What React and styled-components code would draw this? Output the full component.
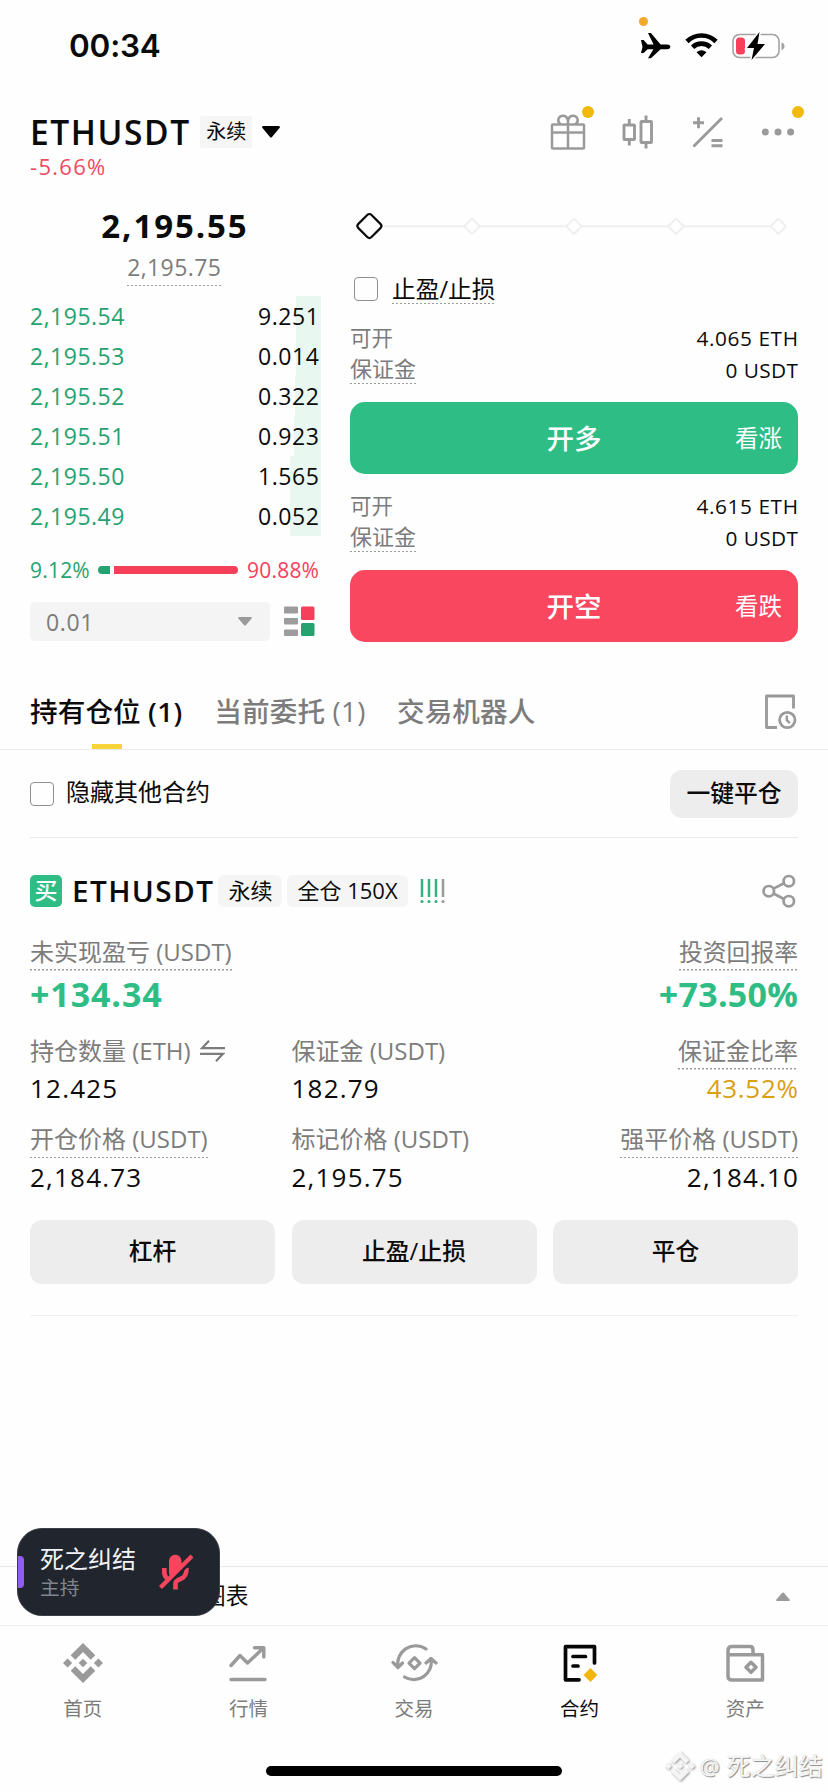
import React from 'react';
import styled, { createGlobalStyle } from 'styled-components';

const GREEN = '#2ebd85';
const BOOK_GREEN = '#25a26f';
const RED = '#f8475e';
const GRAY = '#9a9a9a';
const LABEL = '#7c7c7c';
const SANS = '"Open Sans", "Noto Sans CJK SC", sans-serif';

const Global = createGlobalStyle`
  * { box-sizing: border-box; }
  body { margin: 0; background: #fefefe; }
  button { font: inherit; border: 0; padding: 0; }
`;

const Screen = styled.div`
  position: relative;
  width: 828px;
  height: 1792px;
  display: flex;
  flex-direction: column;
  overflow: hidden;
  background: #fefefe;
  color: #0b0b0b;
  font-family: ${SANS};
  white-space: nowrap;
`;

const Txt = styled.span`
  display: block;
  font-size: ${p => p.$size || 24}px;
  line-height: ${p => p.$lh || 32}px;
  font-weight: ${p => p.$w || 400};
  color: ${p => p.$c || 'inherit'};
  letter-spacing: ${p => p.$ls || 0}px;
  margin-top: ${p => p.$mt || 0}px;
  margin-right: ${p => -(p.$ls || 0)}px;
`;

const Dotted = styled(Txt)`
  width: max-content;
  height: max-content;
  padding-bottom: ${p => p.$gap ?? 0}px;
  background: repeating-linear-gradient(90deg, #9c9c9c 0 2px, transparent 2px 4px) left bottom / 100% 1.5px no-repeat;
`;

/* status bar */
const StatusBar = styled.header`
  display: flex;
  align-items: center;
  justify-content: space-between;
  height: 92px;
  padding: 0 42px 0 69px;
  flex: none;
`;
const Clock = styled.div`
  font: 600 31.5px/40px Inter, sans-serif;
  letter-spacing: -0.2px;
`;
const StatusIcons = styled.div`
  display: flex;
  position: relative;
`;
const Dot = styled.i`
  position: absolute;
  width: ${p => p.$d}px;
  height: ${p => p.$d}px;
  border-radius: 50%;
  background: ${p => p.$c || '#f0b90b'};
  top: ${p => p.$t}px;
  left: ${p => p.$l}px;
`;

/* symbol header */
const SymbolBar = styled.div`
  display: flex;
  justify-content: space-between;
  height: 114px;
  padding: 20px 32px 0 30px;
  flex: none;
`;
const SymbolLine = styled.div`
  display: flex;
  align-items: center;
  height: 40px;
`;
const Tag = styled.span`
  height: 32px;
  line-height: 31px;
  padding: 0 ${p => p.$px || 10}px;
  margin-left: ${p => p.$ml || 0}px;
  font-size: ${p => p.$size || 22}px;
  border-radius: ${p => p.$r || 6}px;
  background: #f5f5f5;
`;
const CaretButton = styled.button`
  display: flex;
  margin-left: 10px;
  background: none;
`;
const HeaderIcons = styled.div`
  display: flex;
  gap: 34px;
  height: 40px;
  align-items: center;
`;
const IconBox = styled.div`
  position: relative;
  width: 36px;
  height: 36px;
`;

/* trading area */
const Trade = styled.section`
  display: grid;
  grid-template-columns: 291px 448px;
  column-gap: 29px;
  padding: 0 30px;
  height: 454px;
  flex: none;
`;
const Book = styled.div`
  display: flex;
  flex-direction: column;
`;
const LastPrice = styled.div`
  display: flex;
  flex-direction: column;
  align-items: center;
  height: 90px;
  padding-right: 3px;
`;
const BookRow = styled.div`
  display: flex;
  justify-content: space-between;
  align-items: center;
  height: 40px;
  padding-right: 2px;
  background: linear-gradient(#e9f7f1, #e9f7f1) right / ${p => p.$depth}px 100% no-repeat;
`;
const Ratio = styled.div`
  display: flex;
  align-items: center;
  justify-content: space-between;
  height: 68px;
  padding: 0 2px 0 0;
`;
const RatioTrack = styled.div`
  display: flex;
  gap: 4px;
  width: 140px;
  height: 8px;
`;
const RatioPart = styled.div`
  background: ${p => p.$c};
  border-radius: ${p => (p.$start ? '4px 0 0 4px' : '0 4px 4px 0')};
  flex: ${p => (p.$start ? '0 0 12px' : '1')};
`;
const StepRow = styled.div`
  display: flex;
  align-items: center;
  gap: 14px;
  margin-top: -2px;
`;
const Select = styled.div`
  display: flex;
  align-items: center;
  justify-content: space-between;
  width: 240px;
  height: 39px;
  padding: 0 18px 0 16px;
  border-radius: 5px;
  background: #f4f4f4;
`;

const Order = styled.div`
  display: flex;
  flex-direction: column;
`;
const OrderFilter = styled.label`
  display: flex;
  align-items: flex-start;
  gap: 14px;
  height: 76px;
  padding: 28px 0 0 4px;
`;
const Check = styled.span`
  flex: none;
  width: 24px;
  height: 24px;
  margin-top: ${p => p.$mt || 0}px;
  border: 1.5px solid #8f8f8f;
  border-radius: 4px;
`;
const KeyRow = styled.div`
  display: flex;
  justify-content: space-between;
  height: 32px;
`;
const OrderBlock = styled.div`
  display: flex;
  flex-direction: column;
  height: 168px;
`;
const OrderButton = styled.button`
  position: relative;
  display: flex;
  align-items: center;
  justify-content: center;
  height: 72px;
  margin-top: 16px;
  border-radius: 15px;
  background: ${p => p.$c};
  color: #fff;
  font-size: 27.5px;
  font-weight: 500;
  padding-bottom: 3px;
`;
const Hint = styled.small`
  position: absolute;
  right: 16px;
  font-size: 23.5px;
  font-weight: 400;
`;

/* tabs */
const Tabs = styled.nav`
  display: flex;
  align-items: flex-start;
  height: 90px;
  padding: 32px 30px 0 30px;
  border-bottom: 1.5px solid #ebebeb;
  flex: none;
`;
const Tab = styled.div`
  position: relative;
  height: 57px;
  margin-right: ${p => p.$mr}px;
  font-size: 27.6px;
  line-height: 38px;
  letter-spacing: 0.1px;
  font-weight: 500;
  color: ${p => (p.$on ? '#0b0b0b' : LABEL)};
  &::after {
    content: '';
    display: ${p => (p.$on ? 'block' : 'none')};
    position: absolute;
    left: 62px;
    bottom: 0;
    width: 30px;
    height: 5px;
    background: #f8d33a;
  }
`;
const Count = styled.b`
  font-weight: ${p => (p.$on ? 600 : 500)};
  letter-spacing: 0.5px;
`;
const Push = styled.div`
  display: flex;
  margin-left: auto;
`;
const Filter = styled.div`
  display: flex;
  align-items: center;
  height: 88px;
  margin: 0 30px;
  border-bottom: 1.5px solid #ebebeb;
  flex: none;
`;
const HideText = styled(Txt)`
  margin: 0 auto 3px 12px;
`;
const SoftButton = styled.button`
  height: ${p => p.$h || 48}px;
  width: ${p => (p.$width ? `${p.$width}px` : 'auto')};
  border-radius: 12px;
  background: #ededed;
  color: #0b0b0b;
  font-size: 23.8px;
  font-weight: 500;
  line-height: 1;
`;

/* position card */
const Card = styled.section`
  display: flex;
  flex-direction: column;
  height: 478px;
  margin: 0 30px;
  border-bottom: 1.5px solid #f0f0f0;
  flex: none;
`;
const CardHead = styled.div`
  display: flex;
  align-items: center;
  height: 32px;
  margin-top: 37px;
`;
const Side = styled.span`
  width: 32px;
  height: 32px;
  border-radius: 5px;
  background: ${GREEN};
  color: #fff;
  font-size: 23px;
  font-weight: 500;
  line-height: 31px;
  text-align: center;
`;
const PairName = styled(Txt)`
  margin-left: 10px;
`;
const LevWrap = styled.span`
  display: flex;
  margin-left: 12px;
`;
const Metrics = styled.div`
  display: grid;
  grid-template-columns: 261.5px 1fr auto;
  height: ${p => p.$h}px;
  padding-top: ${p => p.$pt || 0}px;
`;
const Metric = styled.div`
  display: flex;
  flex-direction: column;
  align-items: ${p => (p.$end ? 'flex-end' : 'flex-start')};
`;
const MetricLabel = styled.div`
  display: flex;
  align-items: flex-start;
  gap: 9px;
  height: 38.5px;
`;
const SwapWrap = styled.span`
  padding-top: 5px;
`;
const Actions = styled.div`
  display: grid;
  grid-template-columns: repeat(3, 1fr);
  gap: 16.5px;
`;

/* bottom */
const Spacer = styled.div`
  flex: 1;
`;
const ChartBar = styled.div`
  display: flex;
  align-items: center;
  justify-content: space-between;
  height: 60px;
  padding: 0 38px 0 203px;
  border-top: 1.5px solid #e8e8e8;
  border-bottom: 1.5px solid #eeeeee;
  flex: none;
`;
const Nav = styled.nav`
  display: grid;
  grid-template-columns: repeat(5, 1fr);
  height: 140px;
  padding-top: 16.5px;
  flex: none;
`;
const NavItem = styled.div`
  display: flex;
  flex-direction: column;
  align-items: center;
  gap: 10px;
  color: ${p => (p.$on ? '#0b0b0b' : LABEL)};
  font-size: 19.5px;
  line-height: 32px;
`;
const HomeLine = styled.div`
  width: 296px;
  height: 10px;
  margin: 0 auto 16px;
  border-radius: 5px;
  background: #000;
  flex: none;
`;
const Speaker = styled.aside`
  position: absolute;
  left: 16.5px;
  top: 1528px;
  display: flex;
  align-items: center;
  width: 203.5px;
  height: 88px;
  border: 1.5px solid #3a4048;
  border-radius: 25px;
  background: #20252e;
`;
const Level = styled.i`
  width: 6px;
  height: 32px;
  border-radius: 0 4px 4px 0;
  background: #8f5df0;
`;
const SpeakerName = styled.div`
  margin: 0 23px 0 16.5px;
`;
const Watermark = styled.div`
  position: absolute;
  left: 665px;
  top: 1750px;
  display: flex;
  align-items: center;
  gap: 5px;
  font-size: 24px;
  line-height: 32px;
  color: #f7f7f7;
  text-shadow: 1px 1px 1px #8c8c8c, 0 0 1px #b5b5b5;
  svg { filter: drop-shadow(1px 1px 1px #999); }
`;
const At = styled.span`
  margin-right: 2px;
  font-size: 22px;
`;

const Caret = ({ w, h, up, c }) => (
  <svg width={w} height={h} viewBox="0 0 18 12" preserveAspectRatio="none">
    <path d={up ? 'M1.500 12Q-.5 11.500 .5 10L8 1Q9 0 10 1L17.500 10Q18.500 11.500 16.500 12Z' : 'M1 0H17Q18.500 1 17.500 2L10 11Q9 12 8 11L.5 2Q-.5 1 1 0Z'} fill={c} />
  </svg>
);

const StatusSvg = () => (
  <svg width="146" height="28" viewBox="0 0 146 28">
    <path d="M1 8.500h2.600l4 4.400h6L8 1.400h2.900l9.700 11.500h6.700c4 0 4 4.800 0 4.800h-6.700l-9.700 8.900H8l5.400-8.900H7.600l-4 3.800H1l1.500-6z" transform="translate(0 -.4)" fill="#000" />
    <g fill="none" stroke="#000" strokeWidth="4.700">
      <path d="M47 9.500a20.500 20.500 0 0 1 29 0" />
      <path d="M52.600 15.200a13 13 0 0 1 17.800 0" />
    </g>
    <path d="M56.500 20.200q5-4 10 0l-5 5z" fill="#000" />
    <rect x="93" y="2.500" width="46" height="23" rx="6.500" fill="none" stroke="#a2a2a2" strokeWidth="1.600" />
    <path d="M141.500 10.500q3 .8 3 3.700t-3 3.700z" fill="#a2a2a2" />
    <rect x="96" y="5.500" width="9" height="17" rx="3.500" fill="#f8405a" />
    <path d="M119.500 0 107 16h7l-2.500 12 13.500-16h-7.500z" fill="#000" stroke="#fefefe" strokeWidth="3" paintOrder="stroke" />
  </svg>
);

const Gift = () => (
  <svg width="36" height="36" viewBox="0 0 36 36" fill="none" stroke={GRAY} strokeWidth="2.500" strokeLinejoin="round">
    <rect x="2" y="10.500" width="32" height="24" rx=".8" />
    <path d="M2 18.500H34M18 10V34.500" />
    <path d="M10.500 10.500C6 6.500 9 1.700 13 1.700S18.500 5 18 10.500C17.500 5 19 1.700 23 1.700S30 6.500 25.500 10.500" />
  </svg>
);
const Candles = () => (
  <svg width="36" height="36" viewBox="0 0 36 36" fill="none" stroke={GRAY} strokeWidth="2.900">
    <path d="M9.300 5v5.500M9.300 25.500v6M26 1.500v6M26 28.500v6" />
    <rect x="4" y="11" width="10.500" height="14.500" rx=".6" />
    <rect x="21" y="7.500" width="10.500" height="21" rx=".6" />
  </svg>
);
const Calc = () => (
  <svg width="36" height="36" viewBox="0 0 36 36" fill="none" stroke={GRAY} strokeWidth="2.900">
    <path d="M3.500 32.500 32 4M3 8.700h11M8.500 3.200v11M21.500 26.500h11M21.500 31.800h11" />
  </svg>
);
const More = () => (
  <svg width="36" height="36" viewBox="0 0 36 36" fill={GRAY}>
    <circle cx="5.300" cy="18" r="3.500" /><circle cx="18" cy="18" r="3.500" /><circle cx="30.600" cy="18" r="3.500" />
  </svg>
);
const BookMode = () => (
  <svg width="31" height="31" viewBox="0 0 31 31">
    <g fill="#9c9c9c">
      <rect width="14" height="7" rx="1" y=".5" /><rect y="12" width="14" height="6.500" rx="1" /><rect y="23.500" width="14" height="6.500" rx="1" />
    </g>
    <rect x="17" y=".5" width="13.500" height="13.500" rx="1.500" fill="#f6405b" />
    <rect x="17" y="17" width="13.500" height="13" rx="1.500" fill={BOOK_GREEN} />
  </svg>
);
const Slider = () => (
  <svg width="448" height="40" viewBox="0 0 448 40" fill="#fefefe">
    <path d="M34 20.300H428" stroke="#efefef" strokeWidth="2" />
    {[122, 224, 326, 428.300].map(x => (
      <rect key={x} x={x - 5.500} y="14.800" width="11" height="11" rx="1.200" stroke="#efefef" strokeWidth="2" transform={`rotate(45 ${x} 20.300)`} />
    ))}
    <rect x="10.100" y="10.700" width="18.600" height="18.600" rx="3" stroke="#0b0b0b" strokeWidth="2.200" transform="rotate(45 19.400 20)" />
  </svg>
);
const History = () => (
  <svg width="34" height="38" viewBox="0 0 34 38" fill="none" stroke={GRAY} strokeWidth="2.800" strokeLinejoin="round">
    <path d="M29.500 16.500V4H2.500V35.500H13" />
    <circle cx="23.300" cy="28" r="7.700" />
    <path d="M22.800 23.500v4.700l3 3" strokeWidth="2.400" />
  </svg>
);
const Leverage = () => (
  <svg width="28" height="26" viewBox="0 0 28 26" fill="none" strokeWidth="2.500">
    <path d="M2 1v18M9 1v18M16 1v18" stroke="#35b280" />
    <path d="M23 1v18" stroke={GRAY} />
    <g fill="#35b280"><circle cx="2" cy="23.500" r="1.600" /><circle cx="9" cy="23.500" r="1.600" /><circle cx="16" cy="23.500" r="1.600" /></g>
    <circle cx="23" cy="23.500" r="1.600" fill={GRAY} />
  </svg>
);
const Share = () => (
  <svg width="36" height="36" viewBox="1 0 36 36" fill="none" stroke={GRAY} strokeWidth="2.700">
    <path d="M13 15.400 22.500 10.500M13 20.700l9.500 5" />
    <circle cx="7.800" cy="18.200" r="5.200" /><circle cx="27.800" cy="8.200" r="5.200" /><circle cx="27.800" cy="28.200" r="5.200" />
  </svg>
);
const Swap = () => (
  <svg width="25" height="22" viewBox="0 0 25 22" fill="none" stroke="#7c7c7c" strokeWidth="2.200">
    <path d="M9 .8 2 8.200H25M0 13.800H23L16 21.200" />
  </svg>
);
const MicOff = () => (
  <svg width="34" height="36" viewBox="0 0 34 36">
    <path d="M10 7.500C10 -1.500 22.500 -1.500 22.500 7.500V12L11.500 23Q10 21 10 18Z" fill="#f6465d" />
    <path d="M5.300 14v4q0 4 3 6.500M27.500 14q.5 8.500-6 11-5 1.500-5 4V35.500" fill="none" stroke="#f6465d" strokeWidth="4.600" />
    <path d="M4 36 35.500 4.500" stroke="#20252e" strokeWidth="2.400" />
    <path d="M1.500 33.500 33 2" stroke="#f6465d" strokeWidth="4.200" />
  </svg>
);

const Logo = ({ size = 40, c = GRAY }) => (
  <svg width={size} height={size} viewBox="0 0 40 40" fill={c}>
    <path d="M20 0 32.300 12.200 27.700 16.800 20 9 12.300 16.800 7.700 12.200ZM20 40 7.700 27.800 12.300 23.200 20 31 27.700 23.200 32.300 27.800ZM20 15.700 24.300 20 20 24.300 15.700 20ZM4.600 15.500 9.100 20 4.600 24.500 0 20ZM35.400 15.500 40 20 35.400 24.500 30.900 20Z" />
  </svg>
);
const Market = () => (
  <svg width="40" height="40" viewBox="0 0 40 40" fill="none" stroke={GRAY} strokeWidth="3.400" strokeLinecap="round" strokeLinejoin="round">
    <path d="M3 22.500 12 12.500 19.500 20 35.500 5M26.500 4.800h9.300V14M3 36.500H37" />
  </svg>
);
const TradeIcon = () => (
  <svg width="48" height="40" viewBox="0 0 48 40" fill="none" stroke={GRAY} strokeWidth="3.200" strokeLinecap="round" strokeLinejoin="round">
    <path d="M36 6A18 18 0 0 0 8 24M3 19.500 8 24.500 12.500 20M14.500 34A17.500 17.500 0 0 0 41 16M36 20 41 15.500 46 20" />
    <path d="M24.500 14.700 30 20.200 24.500 25.700 19 20.200Z" />
  </svg>
);
const Futures = () => (
  <svg width="40" height="40" viewBox="0 0 40 40" fill="none" stroke="#050505" strokeWidth="3.700" strokeLinecap="round" strokeLinejoin="round">
    <path d="M34.500 20V3.700H5.500V36.800H19M13 13.500H25.500M13 23H18" />
    <path d="M30.500 25 37.300 32 30.500 39 23.500 32Z" fill="#f5b50f" stroke="none" />
  </svg>
);
const Wallet = () => (
  <svg width="40" height="40" viewBox="0 0 40 40" fill="none" stroke={GRAY} strokeWidth="3.500" strokeLinejoin="round">
    <path d="M28 11.500V7Q28 3.500 25 3.500H7Q3 3.500 3 7.500V33Q3 37 7 37H37.500V11.800H3" />
    <path d="M26 19.300 31 24.300 26 29.300 21 24.300Z" />
  </svg>
);

const BIDS = [
  ['2,195.54', '9.251', 25],
  ['2,195.53', '0.014', 25],
  ['2,195.52', '0.322', 26],
  ['2,195.51', '0.923', 27],
  ['2,195.50', '1.565', 31],
  ['2,195.49', '0.052', 31],
];

const NAV = [
  ['首页', <Logo />],
  ['行情', <Market />],
  ['交易', <TradeIcon />],
  ['合约', <Futures />, true],
  ['资产', <Wallet />],
];

const OrderInfo = ({ amount }) => (
  <>
    <KeyRow>
      <Txt $size={21.5} $c={LABEL}>可开</Txt>
      <Txt $size={20.8} $ls={0.6}>{amount}</Txt>
    </KeyRow>
    <KeyRow>
      <Dotted $size={22} $lh={29} $gap={1} $c={LABEL}>保证金</Dotted>
      <Txt $size={20.8} $ls={0.4}>0 USDT</Txt>
    </KeyRow>
  </>
);

const Field = ({ label, dotted, value, color, end, swap }) => (
  <Metric $end={end}>
    <MetricLabel>
      {dotted
        ? <Dotted $size={24} $gap={3} $c={LABEL}>{label}</Dotted>
        : <Txt $size={24} $c={LABEL}>{label}</Txt>}
      {swap && <SwapWrap><Swap /></SwapWrap>}
    </MetricLabel>
    <Txt $size={26} $lh={30} $ls={color ? 0.7 : 1.2} $c={color}>{value}</Txt>
  </Metric>
);

export default function App() {
  return (
    <Screen>
      <Global />
      <StatusBar>
        <Clock>00:34</Clock>
        <StatusIcons>
          <Dot $d={9} $t={-15} $l={-1} $c="#f0a92b" />
          <StatusSvg />
        </StatusIcons>
      </StatusBar>

      <SymbolBar>
        <div>
          <SymbolLine>
            <Txt $size={33.5} $w={600} $lh={40} $ls={1.6}>ETHUSDT</Txt>
            <Tag $px={6} $ml={11} $size={20} $r={3}>永续</Tag>
            <CaretButton><Caret w={18} h={12} c="#000" /></CaretButton>
          </SymbolLine>
          <Txt $size={22} $w={500} $lh={28} $ls={1.3} $c="#ee4b62">-5.66%</Txt>
        </div>
        <HeaderIcons>
          <IconBox><Gift /><Dot $d={12} $t={-8} $l={32} /></IconBox>
          <IconBox><Candles /></IconBox>
          <IconBox><Calc /></IconBox>
          <IconBox><More /><Dot $d={12} $t={-8} $l={32} /></IconBox>
        </HeaderIcons>
      </SymbolBar>

      <Trade>
        <Book>
          <LastPrice>
            <Txt $size={33} $w={700} $lh={40} $ls={1.9}>2,195.55</Txt>
            <Dotted $size={23} $lh={37} $mt={3} $ls={0.4} $c={LABEL}>2,195.75</Dotted>
          </LastPrice>
          {BIDS.map(([price, qty, depth]) => (
            <BookRow key={price} $depth={depth}>
              <Txt $size={23} $ls={0.5} $c={BOOK_GREEN}>{price}</Txt>
              <Txt $size={23} $ls={0.6}>{qty}</Txt>
            </BookRow>
          ))}
          <Ratio>
            <Txt $size={21} $ls={0.2} $c={BOOK_GREEN}>9.12%</Txt>
            <RatioTrack>
              <RatioPart $start $c={BOOK_GREEN} />
              <RatioPart $c="#f6405b" />
            </RatioTrack>
            <Txt $size={21} $ls={0.2} $c="#f6405b">90.88%</Txt>
          </Ratio>
          <StepRow>
            <Select>
              <Txt $size={23} $ls={0.6} $c={LABEL}>0.01</Txt>
              <Caret w={14} h={9} c={GRAY} />
            </Select>
            <BookMode />
          </StepRow>
        </Book>

        <Order>
          <Slider />
          <OrderFilter>
            <Check $mt={3} />
            <Dotted $size={23.7} $lh={30}>止盈/止损</Dotted>
          </OrderFilter>
          <OrderBlock>
            <OrderInfo amount="4.065 ETH" />
            <OrderButton $c={GREEN}>开多<Hint>看涨</Hint></OrderButton>
          </OrderBlock>
          <OrderBlock>
            <OrderInfo amount="4.615 ETH" />
            <OrderButton $c={RED}>开空<Hint>看跌</Hint></OrderButton>
          </OrderBlock>
        </Order>
      </Trade>

      <Tabs>
        <Tab $on $mr={31.5}>持有仓位 <Count $on>(1)</Count></Tab>
        <Tab $mr={31}>当前委托 <Count>(1)</Count></Tab>
        <Tab>交易机器人</Tab>
        <Push><History /></Push>
      </Tabs>

      <Filter>
        <Check />
        <HideText $size={24}>隐藏其他合约</HideText>
        <SoftButton $width={128}>一键平仓</SoftButton>
      </Filter>

      <Card>
        <CardHead>
          <Side>买</Side>
          <PairName $size={29.7} $w={600} $ls={1.4}>ETHUSDT</PairName>
          <Tag $ml={5.5}>永续</Tag>
          <Tag $ml={5}>全仓 150X</Tag>
          <LevWrap><Leverage /></LevWrap>
          <Push><Share /></Push>
        </CardHead>
        <Metrics $h={127.5} $pt={28.5}>
          <Metric>
            <MetricLabel><Dotted $size={24} $gap={3} $c={LABEL}>未实现盈亏 (USDT)</Dotted></MetricLabel>
            <Txt $size={34} $w={700} $lh={40} $ls={0.9} $c={GREEN}>+134.34</Txt>
          </Metric>
          <span />
          <Metric $end>
            <MetricLabel><Dotted $size={23.8} $gap={3} $c={LABEL}>投资回报率</Dotted></MetricLabel>
            <Txt $size={34} $w={700} $lh={40} $ls={0.3} $c={GREEN}>+73.50%</Txt>
          </Metric>
        </Metrics>
        <Metrics $h={88.5}>
          <Field label="持仓数量 (ETH)" value="12.425" swap />
          <Field label="保证金 (USDT)" value="182.79" />
          <Field label="保证金比率" value="43.52%" color="#d9a013" dotted end />
        </Metrics>
        <Metrics $h={96.5}>
          <Field label="开仓价格 (USDT)" value="2,184.73" dotted />
          <Field label="标记价格 (USDT)" value="2,195.75" />
          <Field label="强平价格 (USDT)" value="2,184.10" dotted end />
        </Metrics>
        <Actions>
          <SoftButton $h={64}>杠杆</SoftButton>
          <SoftButton $h={64}>止盈/止损</SoftButton>
          <SoftButton $h={64}>平仓</SoftButton>
        </Actions>
      </Card>

      <Spacer />

      <ChartBar>
        <Txt $size={22.7}>图表</Txt>
        <Caret w={14} h={9} up c={GRAY} />
      </ChartBar>
      <Nav>
        {NAV.map(([name, icon, on]) => (
          <NavItem key={name} $on={on}>{icon}{name}</NavItem>
        ))}
      </Nav>
      <HomeLine />

      <Speaker>
        <Level />
        <SpeakerName>
          <Txt $size={24} $lh={32} $c="#f2f3f5">死之纠结</Txt>
          <Txt $size={19.7} $lh={26} $c="#80858d">主持</Txt>
        </SpeakerName>
        <MicOff />
      </Speaker>

      <Watermark>
        <Logo size={30} c="#f4f4f4" />
        <At>@</At>
        死之纠结
      </Watermark>
    </Screen>
  );
}
